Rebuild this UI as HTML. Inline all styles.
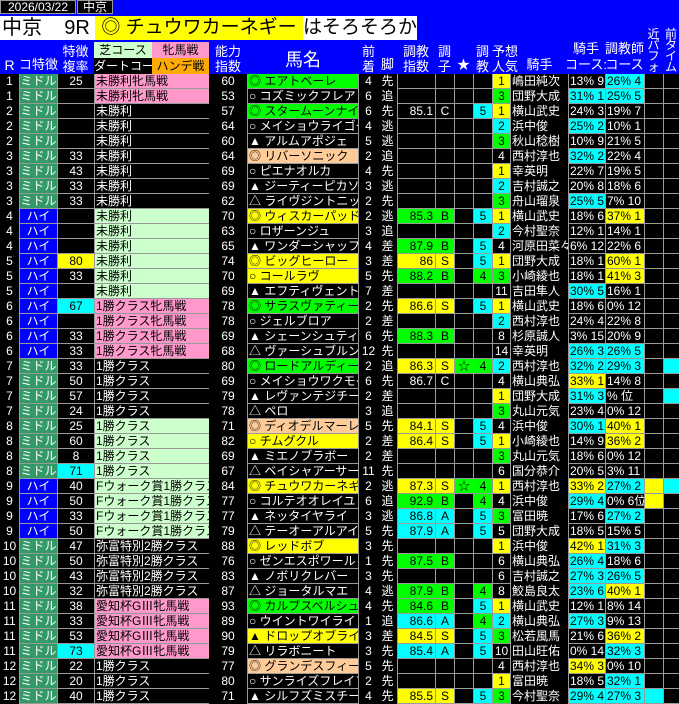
<!DOCTYPE html>
<html><head><meta charset="utf-8">
<style>
*{margin:0;padding:0}
body{width:679px;height:703px;background:#000;position:relative;overflow:hidden;font-family:"Liberation Sans","Noto Sans CJK JP",sans-serif;}
.hd{position:absolute;left:0;top:0;width:679px;height:74px;background:#0000ff}
.a{position:absolute;color:#fff;font-size:13px;line-height:14px;text-align:center;white-space:nowrap}
.r{position:absolute;left:0;height:15px;width:679px;display:grid;grid-template-columns:19px 38px 37px 115px 38px 112px 19px 19px 38px 19px 19px 19px 19px 57px 37px 39px 19px 16px}
.r>div{box-sizing:border-box;height:15px;line-height:14px;font-size:12px;overflow:hidden;white-space:nowrap;color:#fff;text-align:center;background:#000}
.r>div.b{border-left:1px solid #999;border-bottom:1px solid #999}
.r>div:nth-child(6){border-right:1px solid #999}
.r>div:nth-child(13){border-right:1px solid #999}
.r>div.L{text-align:left;padding-left:1px}
.r>div.R{text-align:right;padding-right:2px}
.r>div.y{background:#ffff00;color:#000}
.r>div.c{background:#00ffff;color:#000}
.r>div.g{background:#00ff00;color:#000}
.r>div.p{background:#ff99cc;color:#000}
.r>div.l{background:#ccffcc;color:#000}
.r>div.o{background:#ffcc99;color:#000}
.r>div.M{background:#339966;color:#fff}
.r>div.H{background:#0000ff;color:#fff}
</style></head><body>
<div class="hd"></div>
<div class="a" style="left:0;top:0;width:76px;height:14px;background:#000;border:1px solid #999;box-sizing:border-box;font-size:12px;line-height:12px">2026/03/22</div>
<div class="a" style="left:77px;top:0;width:36px;height:14px;background:#000;border:1px solid #999;box-sizing:border-box;font-size:12px;line-height:12px">中京</div>
<div class="a" style="left:0;top:16px;width:95px;height:24px;background:#fff;color:#000;font-size:20px;line-height:24px;text-align:left;padding-left:2px;box-sizing:border-box">中京&nbsp;&nbsp;&nbsp;&nbsp;9R</div>
<div class="a" style="left:95px;top:16px;width:208px;height:24px;background:#ffff00;color:#000;font-size:19px;line-height:24px">◎ チュウワカーネギー</div>
<div class="a" style="left:303px;top:16px;width:114px;height:24px;background:#fff;color:#000;font-size:19px;line-height:24px">はそろそろか</div>
<div class="a" style="left:0;top:58px;width:19px;font-size:14px">R</div>
<div class="a" style="left:19px;top:58px;width:38px;font-size:13px">コ特徴</div>
<div class="a" style="left:57px;top:44px;width:37px;font-size:13px;line-height:15px">特徴<br>複率</div>
<div class="a" style="left:94px;top:42px;width:58px;height:16px;background:#ccffcc;color:#000;font-size:12px;line-height:16px">芝コース</div>
<div class="a" style="left:152px;top:42px;width:57px;height:16px;background:#ff99cc;color:#000;font-size:12px;line-height:16px">牝馬戦</div>
<div class="a" style="left:94px;top:58px;width:58px;height:16px;background:#000;font-size:12px;line-height:16px;overflow:hidden">ダートコー.</div>
<div class="a" style="left:152px;top:58px;width:57px;height:16px;background:#ffaa00;color:#000;font-size:12px;line-height:16px">ハンデ戦</div>
<div class="a" style="left:209px;top:44px;width:38px;font-size:13px;line-height:15px">能力<br>指数</div>
<div class="a" style="left:247px;top:50px;width:112px;font-size:18px;line-height:20px">馬名</div>
<div class="a" style="left:359px;top:44px;width:19px;font-size:13px;line-height:15px">前<br>着</div>
<div class="a" style="left:378px;top:58px;width:19px;font-size:13px">脚</div>
<div class="a" style="left:397px;top:44px;width:38px;font-size:13px;line-height:15px">調教<br>指数</div>
<div class="a" style="left:435px;top:44px;width:19px;font-size:13px;line-height:15px">調<br>子</div>
<div class="a" style="left:454px;top:58px;width:19px;font-size:13px">★</div>
<div class="a" style="left:473px;top:44px;width:19px;font-size:13px;line-height:15px">調<br>教</div>
<div class="a" style="left:492px;top:44px;width:40px;font-size:13px;line-height:15px;text-align:left">予想<br>人気</div>
<div class="a" style="left:511px;top:58px;width:57px;font-size:13px">騎手</div>
<div class="a" style="left:562px;top:42px;width:48px;font-size:13px">騎手</div>
<div class="a" style="left:562px;top:58px;width:48px;font-size:13px">コース:</div>
<div class="a" style="left:605px;top:42px;width:39px;font-size:13px">調教師</div>
<div class="a" style="left:605px;top:58px;width:39px;font-size:13px">コース</div>
<div class="a" style="left:644px;top:29px;width:19px;font-size:12px;line-height:11px">近<br>パ<br>フ<br>ォ</div>
<div class="a" style="left:663px;top:29px;width:16px;font-size:12px;line-height:11px">前<br>タ<br>イ<br>ム</div>

<div class="r" style="top:74px"><div>1</div><div class="b M">ミドル</div><div class="b">25</div><div class="b p L">未勝利牝馬戦</div><div>60</div><div class="b g L">◎ エアトベーレ</div><div>4</div><div>先</div><div class="b R"></div><div class="b"></div><div class="b"></div><div class="b"></div><div class="b y">1</div><div class="L">嶋田純次</div><div class="b L">13% 9</div><div class="b c L">26% 4</div><div class="b"></div><div class="b"></div></div>
<div class="r" style="top:89px"><div>1</div><div class="b M">ミドル</div><div class="b"></div><div class="b p L">未勝利牝馬戦</div><div>53</div><div class="b L">○ コズミックフレア</div><div>6</div><div>追</div><div class="b R"></div><div class="b"></div><div class="b"></div><div class="b"></div><div class="b g">3</div><div class="L">団野大成</div><div class="b c L">31% 1</div><div class="b c L">25% 5</div><div class="b"></div><div class="b"></div></div>
<div class="r" style="top:104px"><div>2</div><div class="b M">ミドル</div><div class="b"></div><div class="b L">未勝利</div><div>57</div><div class="b g L">◎ スタームーンナイト</div><div>6</div><div>先</div><div class="b R">85.1</div><div class="b">C</div><div class="b"></div><div class="b c">5</div><div class="b y">1</div><div class="L">横山武史</div><div class="b L">24% 3</div><div class="b L">19% 7</div><div class="b"></div><div class="b"></div></div>
<div class="r" style="top:119px"><div>2</div><div class="b M">ミドル</div><div class="b"></div><div class="b L">未勝利</div><div>64</div><div class="b L">○ メイショウライゴー</div><div>4</div><div>逃</div><div class="b R"></div><div class="b"></div><div class="b"></div><div class="b"></div><div class="b c">2</div><div class="L">浜中俊</div><div class="b c L">25% 2</div><div class="b L">10% 1</div><div class="b"></div><div class="b"></div></div>
<div class="r" style="top:134px"><div>2</div><div class="b M">ミドル</div><div class="b"></div><div class="b L">未勝利</div><div>60</div><div class="b L">▲ アルムアポジェ</div><div>5</div><div>逃</div><div class="b R"></div><div class="b"></div><div class="b"></div><div class="b"></div><div class="b g">3</div><div class="L">秋山稔樹</div><div class="b L">10% 9</div><div class="b L">21% 5</div><div class="b"></div><div class="b"></div></div>
<div class="r" style="top:149px"><div>3</div><div class="b M">ミドル</div><div class="b">33</div><div class="b L">未勝利</div><div>64</div><div class="b o L">◎ リバーソニック</div><div>2</div><div>追</div><div class="b R"></div><div class="b"></div><div class="b"></div><div class="b"></div><div class="b">4</div><div class="L">西村淳也</div><div class="b c L">32% 2</div><div class="b L">22% 4</div><div class="b"></div><div class="b"></div></div>
<div class="r" style="top:164px"><div>3</div><div class="b M">ミドル</div><div class="b">43</div><div class="b L">未勝利</div><div>69</div><div class="b L">○ ピエナオルカ</div><div>4</div><div>先</div><div class="b R"></div><div class="b"></div><div class="b"></div><div class="b"></div><div class="b y">1</div><div class="L">幸英明</div><div class="b L">22% 7</div><div class="b L">19% 5</div><div class="b"></div><div class="b"></div></div>
<div class="r" style="top:179px"><div>3</div><div class="b M">ミドル</div><div class="b">33</div><div class="b L">未勝利</div><div>69</div><div class="b L">▲ ジーティーピカソ</div><div>3</div><div>逃</div><div class="b R"></div><div class="b"></div><div class="b"></div><div class="b"></div><div class="b c">2</div><div class="L">吉村誠之</div><div class="b L">20% 8</div><div class="b L">18% 6</div><div class="b"></div><div class="b"></div></div>
<div class="r" style="top:194px"><div>3</div><div class="b M">ミドル</div><div class="b">33</div><div class="b L">未勝利</div><div>62</div><div class="b L">△ ライヴジントニック</div><div>2</div><div>先</div><div class="b R"></div><div class="b"></div><div class="b"></div><div class="b"></div><div class="b g">3</div><div class="L">舟山瑠泉</div><div class="b c L">25% 5</div><div class="b L">7% 10</div><div class="b"></div><div class="b"></div></div>
<div class="r" style="top:209px"><div>4</div><div class="b H">ハイ</div><div class="b"></div><div class="b l L">未勝利</div><div>70</div><div class="b y L">◎ ウィスカーパッド</div><div>2</div><div>逃</div><div class="b g R">85.3</div><div class="b g">B</div><div class="b"></div><div class="b c">5</div><div class="b y">1</div><div class="L">横山武史</div><div class="b L">18% 6</div><div class="b y L">37% 1</div><div class="b"></div><div class="b"></div></div>
<div class="r" style="top:224px"><div>4</div><div class="b H">ハイ</div><div class="b"></div><div class="b l L">未勝利</div><div>63</div><div class="b L">○ ロザーンジュ</div><div>3</div><div>追</div><div class="b R"></div><div class="b"></div><div class="b"></div><div class="b"></div><div class="b c">2</div><div class="L">今村聖奈</div><div class="b L">12% 1</div><div class="b L">14% 1</div><div class="b"></div><div class="b"></div></div>
<div class="r" style="top:239px"><div>4</div><div class="b H">ハイ</div><div class="b"></div><div class="b l L">未勝利</div><div>65</div><div class="b L">▲ ワンダーシャッフル</div><div>4</div><div>差</div><div class="b g R">87.9</div><div class="b g">B</div><div class="b"></div><div class="b c">5</div><div class="b">4</div><div class="L">河原田菜々</div><div class="b L">6% 12</div><div class="b L">22% 6</div><div class="b"></div><div class="b"></div></div>
<div class="r" style="top:254px"><div>5</div><div class="b H">ハイ</div><div class="b y">80</div><div class="b l L">未勝利</div><div>74</div><div class="b y L">◎ ビッグヒーロー</div><div>3</div><div>差</div><div class="b y R">86</div><div class="b y">S</div><div class="b"></div><div class="b c">5</div><div class="b y">1</div><div class="L">団野大成</div><div class="b L">18% 1</div><div class="b y L">60% 1</div><div class="b"></div><div class="b"></div></div>
<div class="r" style="top:269px"><div>5</div><div class="b H">ハイ</div><div class="b">33</div><div class="b l L">未勝利</div><div>70</div><div class="b y L">○ コールラヴ</div><div>5</div><div>先</div><div class="b g R">88.2</div><div class="b g">B</div><div class="b"></div><div class="b g">4</div><div class="b g">3</div><div class="L">小崎綾也</div><div class="b L">18% 1</div><div class="b y L">41% 3</div><div class="b"></div><div class="b"></div></div>
<div class="r" style="top:284px"><div>5</div><div class="b H">ハイ</div><div class="b"></div><div class="b l L">未勝利</div><div>69</div><div class="b L">▲ エフティヴェント</div><div>7</div><div>差</div><div class="b R"></div><div class="b"></div><div class="b"></div><div class="b"></div><div class="b">11</div><div class="L">吉田隼人</div><div class="b c L">30% 5</div><div class="b L">16% 1</div><div class="b"></div><div class="b"></div></div>
<div class="r" style="top:299px"><div>6</div><div class="b H">ハイ</div><div class="b c">67</div><div class="b p L">1勝クラス牝馬戦</div><div>78</div><div class="b g L">◎ サラスヴァティー</div><div>2</div><div>先</div><div class="b y R">86.6</div><div class="b y">S</div><div class="b"></div><div class="b c">5</div><div class="b y">1</div><div class="L">横山武史</div><div class="b L">18% 6</div><div class="b L">0% 12</div><div class="b"></div><div class="b"></div></div>
<div class="r" style="top:314px"><div>6</div><div class="b H">ハイ</div><div class="b"></div><div class="b p L">1勝クラス牝馬戦</div><div>78</div><div class="b L">○ ジェルブロア</div><div>2</div><div>差</div><div class="b R"></div><div class="b"></div><div class="b"></div><div class="b"></div><div class="b c">2</div><div class="L">西村淳也</div><div class="b L">24% 4</div><div class="b L">22% 8</div><div class="b"></div><div class="b"></div></div>
<div class="r" style="top:329px"><div>6</div><div class="b H">ハイ</div><div class="b">33</div><div class="b p L">1勝クラス牝馬戦</div><div>69</div><div class="b L">▲ シェーンシュティア</div><div>6</div><div>先</div><div class="b g R">88.3</div><div class="b g">B</div><div class="b"></div><div class="b"></div><div class="b">8</div><div class="L">杉原誠人</div><div class="b L">3% 15</div><div class="b L">20% 9</div><div class="b"></div><div class="b"></div></div>
<div class="r" style="top:344px"><div>6</div><div class="b H">ハイ</div><div class="b">33</div><div class="b p L">1勝クラス牝馬戦</div><div>68</div><div class="b L">△ ヴァーシュブルンズ</div><div>12</div><div>先</div><div class="b R"></div><div class="b"></div><div class="b"></div><div class="b"></div><div class="b">14</div><div class="L">幸英明</div><div class="b c L">26% 3</div><div class="b c L">26% 5</div><div class="b"></div><div class="b"></div></div>
<div class="r" style="top:359px"><div>7</div><div class="b M">ミドル</div><div class="b">33</div><div class="b L">1勝クラス</div><div>80</div><div class="b g L">◎ ロードアルディート</div><div>2</div><div>追</div><div class="b y R">86.3</div><div class="b y">S</div><div class="b g">☆</div><div class="b g">4</div><div class="b c">2</div><div class="L">西村淳也</div><div class="b c L">32% 2</div><div class="b c L">29% 3</div><div class="b"></div><div class="b c"></div></div>
<div class="r" style="top:374px"><div>7</div><div class="b M">ミドル</div><div class="b">50</div><div class="b L">1勝クラス</div><div>69</div><div class="b L">○ メイショウワクモイ</div><div>6</div><div>先</div><div class="b R">86.7</div><div class="b">C</div><div class="b"></div><div class="b"></div><div class="b">4</div><div class="L">横山典弘</div><div class="b y L">33% 1</div><div class="b L">14% 8</div><div class="b"></div><div class="b"></div></div>
<div class="r" style="top:389px"><div>7</div><div class="b M">ミドル</div><div class="b">57</div><div class="b L">1勝クラス</div><div>79</div><div class="b L">▲ レヴァンテジチー</div><div>2</div><div>差</div><div class="b R"></div><div class="b"></div><div class="b"></div><div class="b"></div><div class="b y">1</div><div class="L">団野大成</div><div class="b c L">31% 3</div><div class="b L">% 位</div><div class="b"></div><div class="b c"></div></div>
<div class="r" style="top:404px"><div>7</div><div class="b M">ミドル</div><div class="b">24</div><div class="b L">1勝クラス</div><div>78</div><div class="b L">△ ペロ</div><div>3</div><div>追</div><div class="b R"></div><div class="b"></div><div class="b"></div><div class="b"></div><div class="b g">3</div><div class="L">丸山元気</div><div class="b L">23% 4</div><div class="b L">0% 12</div><div class="b"></div><div class="b"></div></div>
<div class="r" style="top:419px"><div>8</div><div class="b M">ミドル</div><div class="b">25</div><div class="b l L">1勝クラス</div><div>71</div><div class="b o L">◎ ディオデルマーレ</div><div>5</div><div>先</div><div class="b y R">84.1</div><div class="b y">S</div><div class="b"></div><div class="b c">5</div><div class="b">4</div><div class="L">浜中俊</div><div class="b c L">30% 1</div><div class="b y L">40% 1</div><div class="b"></div><div class="b"></div></div>
<div class="r" style="top:434px"><div>8</div><div class="b M">ミドル</div><div class="b">60</div><div class="b l L">1勝クラス</div><div>82</div><div class="b y L">○ チムグクル</div><div>2</div><div>差</div><div class="b y R">86.4</div><div class="b y">S</div><div class="b"></div><div class="b c">5</div><div class="b y">1</div><div class="L">小崎綾也</div><div class="b L">14% 9</div><div class="b y L">36% 2</div><div class="b"></div><div class="b"></div></div>
<div class="r" style="top:449px"><div>8</div><div class="b M">ミドル</div><div class="b">8</div><div class="b l L">1勝クラス</div><div>69</div><div class="b L">▲ ミエノブラボー</div><div>2</div><div>差</div><div class="b R"></div><div class="b"></div><div class="b"></div><div class="b"></div><div class="b g">3</div><div class="L">丸山元気</div><div class="b L">18% 6</div><div class="b L">0% 12</div><div class="b"></div><div class="b"></div></div>
<div class="r" style="top:464px"><div>8</div><div class="b M">ミドル</div><div class="b c">71</div><div class="b l L">1勝クラス</div><div>67</div><div class="b L">△ ベイシャアーサー</div><div>11</div><div>先</div><div class="b R"></div><div class="b"></div><div class="b"></div><div class="b"></div><div class="b">6</div><div class="L">国分恭介</div><div class="b L">20% 5</div><div class="b L">3% 11</div><div class="b"></div><div class="b"></div></div>
<div class="r" style="top:479px"><div>9</div><div class="b H">ハイ</div><div class="b">40</div><div class="b l L">Fウォーク賞1勝クラス</div><div>84</div><div class="b y L">◎ チュウワカーネギー</div><div>2</div><div>逃</div><div class="b y R">87.3</div><div class="b y">S</div><div class="b g">☆</div><div class="b g">4</div><div class="b y">1</div><div class="L">西村淳也</div><div class="b y L">33% 2</div><div class="b c L">27% 2</div><div class="b y"></div><div class="b c"></div></div>
<div class="r" style="top:494px"><div>9</div><div class="b H">ハイ</div><div class="b">50</div><div class="b l L">Fウォーク賞1勝クラス</div><div>77</div><div class="b L">○ コルテオオレイユ</div><div>6</div><div>追</div><div class="b g R">92.9</div><div class="b g">B</div><div class="b"></div><div class="b g">4</div><div class="b">4</div><div class="L">浜中俊</div><div class="b c L">29% 4</div><div class="b L">0% 6位</div><div class="b y"></div><div class="b"></div></div>
<div class="r" style="top:509px"><div>9</div><div class="b H">ハイ</div><div class="b">33</div><div class="b l L">Fウォーク賞1勝クラス</div><div>77</div><div class="b L">▲ ネッタイヤライ</div><div>3</div><div>逃</div><div class="b c R">86.8</div><div class="b c">A</div><div class="b"></div><div class="b c">5</div><div class="b g">3</div><div class="L">富田暁</div><div class="b L">17% 6</div><div class="b c L">27% 2</div><div class="b"></div><div class="b"></div></div>
<div class="r" style="top:524px"><div>9</div><div class="b H">ハイ</div><div class="b">50</div><div class="b l L">Fウォーク賞1勝クラス</div><div>79</div><div class="b L">△ テーオーアルアイン</div><div>5</div><div>先</div><div class="b c R">87.9</div><div class="b c">A</div><div class="b"></div><div class="b c">5</div><div class="b">5</div><div class="L">団野大成</div><div class="b L">18% 5</div><div class="b L">15% 5</div><div class="b"></div><div class="b"></div></div>
<div class="r" style="top:539px"><div>10</div><div class="b M">ミドル</div><div class="b">47</div><div class="b L">弥富特別2勝クラス</div><div>88</div><div class="b y L">◎ レッドボブ</div><div>3</div><div>先</div><div class="b R"></div><div class="b"></div><div class="b"></div><div class="b"></div><div class="b y">1</div><div class="L">浜中俊</div><div class="b y L">42% 1</div><div class="b c L">31% 3</div><div class="b"></div><div class="b"></div></div>
<div class="r" style="top:554px"><div>10</div><div class="b M">ミドル</div><div class="b">50</div><div class="b L">弥富特別2勝クラス</div><div>76</div><div class="b L">○ ゼンエスポワール</div><div>1</div><div>先</div><div class="b g R">87.5</div><div class="b g">B</div><div class="b"></div><div class="b"></div><div class="b">6</div><div class="L">横山典弘</div><div class="b c L">26% 4</div><div class="b L">18% 6</div><div class="b"></div><div class="b"></div></div>
<div class="r" style="top:569px"><div>10</div><div class="b M">ミドル</div><div class="b">43</div><div class="b L">弥富特別2勝クラス</div><div>83</div><div class="b L">▲ ノボリクレバー</div><div>3</div><div>先</div><div class="b R"></div><div class="b"></div><div class="b"></div><div class="b"></div><div class="b">6</div><div class="L">吉村誠之</div><div class="b c L">27% 3</div><div class="b c L">26% 5</div><div class="b"></div><div class="b"></div></div>
<div class="r" style="top:584px"><div>10</div><div class="b M">ミドル</div><div class="b">32</div><div class="b L">弥富特別2勝クラス</div><div>87</div><div class="b L">△ ジョータルマエ</div><div>4</div><div>逃</div><div class="b g R">87.9</div><div class="b g">B</div><div class="b"></div><div class="b g">4</div><div class="b">8</div><div class="L">鮫島良太</div><div class="b c L">23% 6</div><div class="b y L">40% 1</div><div class="b"></div><div class="b"></div></div>
<div class="r" style="top:599px"><div>11</div><div class="b M">ミドル</div><div class="b">38</div><div class="b p L">愛知杯GⅢ牝馬戦</div><div>93</div><div class="b g L">◎ カルブスベルシュ</div><div>4</div><div>先</div><div class="b g R">84.6</div><div class="b g">B</div><div class="b"></div><div class="b c">5</div><div class="b y">1</div><div class="L">横山武史</div><div class="b L">12% 1</div><div class="b L">8% 14</div><div class="b"></div><div class="b"></div></div>
<div class="r" style="top:614px"><div>11</div><div class="b M">ミドル</div><div class="b">33</div><div class="b p L">愛知杯GⅢ牝馬戦</div><div>89</div><div class="b L">○ ウイントワイライト</div><div>1</div><div>追</div><div class="b c R">86.6</div><div class="b c">A</div><div class="b"></div><div class="b g">4</div><div class="b c">2</div><div class="L">横山典弘</div><div class="b c L">27% 3</div><div class="b L">9% 13</div><div class="b"></div><div class="b"></div></div>
<div class="r" style="top:629px"><div>11</div><div class="b M">ミドル</div><div class="b">53</div><div class="b p L">愛知杯GⅢ牝馬戦</div><div>90</div><div class="b y L">▲ ドロップオブライト</div><div>3</div><div>差</div><div class="b y R">84.5</div><div class="b y">S</div><div class="b"></div><div class="b c">5</div><div class="b g">3</div><div class="L">松若風馬</div><div class="b L">21% 6</div><div class="b y L">36% 2</div><div class="b"></div><div class="b"></div></div>
<div class="r" style="top:644px"><div>11</div><div class="b M">ミドル</div><div class="b c">73</div><div class="b p L">愛知杯GⅢ牝馬戦</div><div>79</div><div class="b L">△ リラボニート</div><div>3</div><div>先</div><div class="b c R">85.4</div><div class="b c">A</div><div class="b"></div><div class="b c">5</div><div class="b">10</div><div class="L">田山旺佑</div><div class="b L">0% 14</div><div class="b c L">32% 3</div><div class="b"></div><div class="b"></div></div>
<div class="r" style="top:659px"><div>12</div><div class="b M">ミドル</div><div class="b">22</div><div class="b L">1勝クラス</div><div>77</div><div class="b o L">◎ グランデスフィーダ</div><div>5</div><div>先</div><div class="b R"></div><div class="b"></div><div class="b"></div><div class="b"></div><div class="b">4</div><div class="L">西村淳也</div><div class="b y L">34% 3</div><div class="b L">0% 10</div><div class="b"></div><div class="b"></div></div>
<div class="r" style="top:674px"><div>12</div><div class="b M">ミドル</div><div class="b">20</div><div class="b L">1勝クラス</div><div>80</div><div class="b L">○ サンライズフレイブ</div><div>2</div><div>先</div><div class="b R"></div><div class="b"></div><div class="b"></div><div class="b"></div><div class="b y">1</div><div class="L">富田暁</div><div class="b L">18% 5</div><div class="b c L">32% 1</div><div class="b"></div><div class="b"></div></div>
<div class="r" style="top:689px"><div>12</div><div class="b M">ミドル</div><div class="b">40</div><div class="b L">1勝クラス</div><div>71</div><div class="b L">▲ シルフズミスチーフ</div><div>4</div><div>先</div><div class="b y R">85.5</div><div class="b y">S</div><div class="b"></div><div class="b c">5</div><div class="b g">3</div><div class="L">今村聖奈</div><div class="b c L">29% 4</div><div class="b c L">27% 3</div><div class="b c"></div><div class="b"></div></div>
</body></html>
